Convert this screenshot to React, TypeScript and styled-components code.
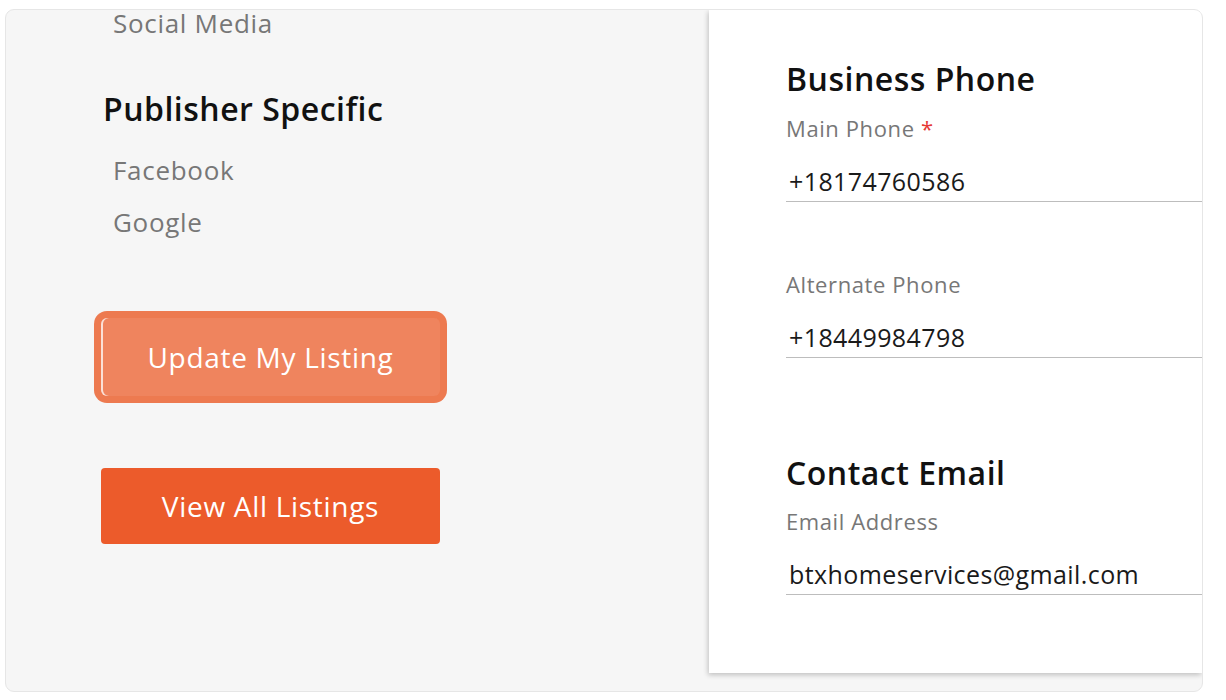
import React from "react";
import styled, { createGlobalStyle } from "styled-components";

const GlobalStyle = createGlobalStyle`
    html, body {
        margin: 0;
        padding: 0;
        background: #fff;
        font-family: "Open Sans", "Noto Sans", sans-serif;
    }
`;

const Panel = styled.div`
    margin: 9px 23px 8px 5px;
    height: 683px;
    box-sizing: border-box;
    border: 1px solid #e6e6e6;
    border-radius: 9px;
    background: #f6f6f6;
    overflow: hidden;
    display: flex;
`;

const Sidebar = styled.div`
    width: 703px;
    flex-shrink: 0;
    padding-left: 95px;
    box-sizing: border-box;
    display: flex;
    flex-direction: column;
    align-items: flex-start;
`;

const NavItem = styled.div<{ $tight?: boolean }>`
    padding-left: 12px;
    font-size: 26px;
    letter-spacing: 0.7px;
    line-height: ${(p) => (p.$tight ? "26px" : "52px")};
    color: #777;
`;

const GroupTitle = styled.div`
    margin: 53px 0 15px 2px;
    font-size: 32px;
    letter-spacing: 0.5px;
    line-height: 40px;
    font-weight: 600;
    color: #111;
`;

const ActionButton = styled.button<{ $focused?: boolean }>`
    width: 339px;
    height: ${(p) => (p.$focused ? "78px" : "76px")};
    padding: 0;
    border: none;
    border-radius: ${(p) => (p.$focused ? "6px" : "4px")};
    background: ${(p) => (p.$focused ? "#ef845e" : "#ec5b2b")};
    color: #fff;
    font-family: inherit;
    font-size: 28px;
    letter-spacing: 0.7px;
    cursor: pointer;
    box-shadow: ${(p) =>
        p.$focused
            ? "inset 2px 0 0 rgba(255,255,255,0.75), 0 0 0 7px #ed7a50"
            : "none"};
`;

const ButtonStack = styled.div`
    margin-top: 70px;
    display: flex;
    flex-direction: column;
    gap: 72px;
`;

const Card = styled.div`
    flex: 1;
    height: 663px;
    background: #fff;
    box-shadow: -1px 2px 5px rgba(0, 0, 0, 0.22);
    padding: 49px 0 0 77px;
    box-sizing: border-box;
    overflow: hidden;
`;

const SectionTitle = styled.h2<{ $gap?: number }>`
    margin: ${(p) => p.$gap ?? 0}px 0 0;
    font-size: 32px;
    letter-spacing: 0.5px;
    line-height: 40px;
    font-weight: 600;
    color: #111;
`;

const Field = styled.div<{ $gap: number }>`
    margin-top: ${(p) => p.$gap}px;
`;

const Label = styled.label`
    display: block;
    font-size: 22px;
    letter-spacing: 0.6px;
    line-height: 28px;
    color: #777;
`;

const Required = styled.span`
    color: #e53935;
`;

const TextInput = styled.input`
    display: block;
    width: 100%;
    height: 41px;
    margin-top: 19px;
    padding: 0 0 1px 3px;
    box-sizing: border-box;
    border: none;
    border-bottom: 1px solid #bdbdbd;
    background: transparent;
    font-family: inherit;
    font-size: 25px;
    letter-spacing: 0.4px;
    color: #1a1a1a;
    outline: none;
`;

const App: React.FC = () => {
    return (<>
        <GlobalStyle />
        <Panel>
            <Sidebar>
                <NavItem $tight>Social Media</NavItem>
                <GroupTitle>Publisher Specific</GroupTitle>
                <NavItem>Facebook</NavItem>
                <NavItem>Google</NavItem>
                <ButtonStack>
                    <ActionButton $focused>Update My Listing</ActionButton>
                    <ActionButton>View All Listings</ActionButton>
                </ButtonStack>
            </Sidebar>
            <Card>
                <SectionTitle>Business Phone</SectionTitle>
                <Field $gap={15}>
                    <Label>Main Phone <Required>*</Required></Label>
                    <TextInput readOnly value="+18174760586" />
                </Field>
                <Field $gap={68}>
                    <Label>Alternate Phone</Label>
                    <TextInput readOnly value="+18449984798" />
                </Field>
                <SectionTitle $gap={95}>Contact Email</SectionTitle>
                <Field $gap={14}>
                    <Label>Email Address</Label>
                    <TextInput readOnly value="btxhomeservices@gmail.com" />
                </Field>
            </Card>
        </Panel>
    </>);
};

export default App;
